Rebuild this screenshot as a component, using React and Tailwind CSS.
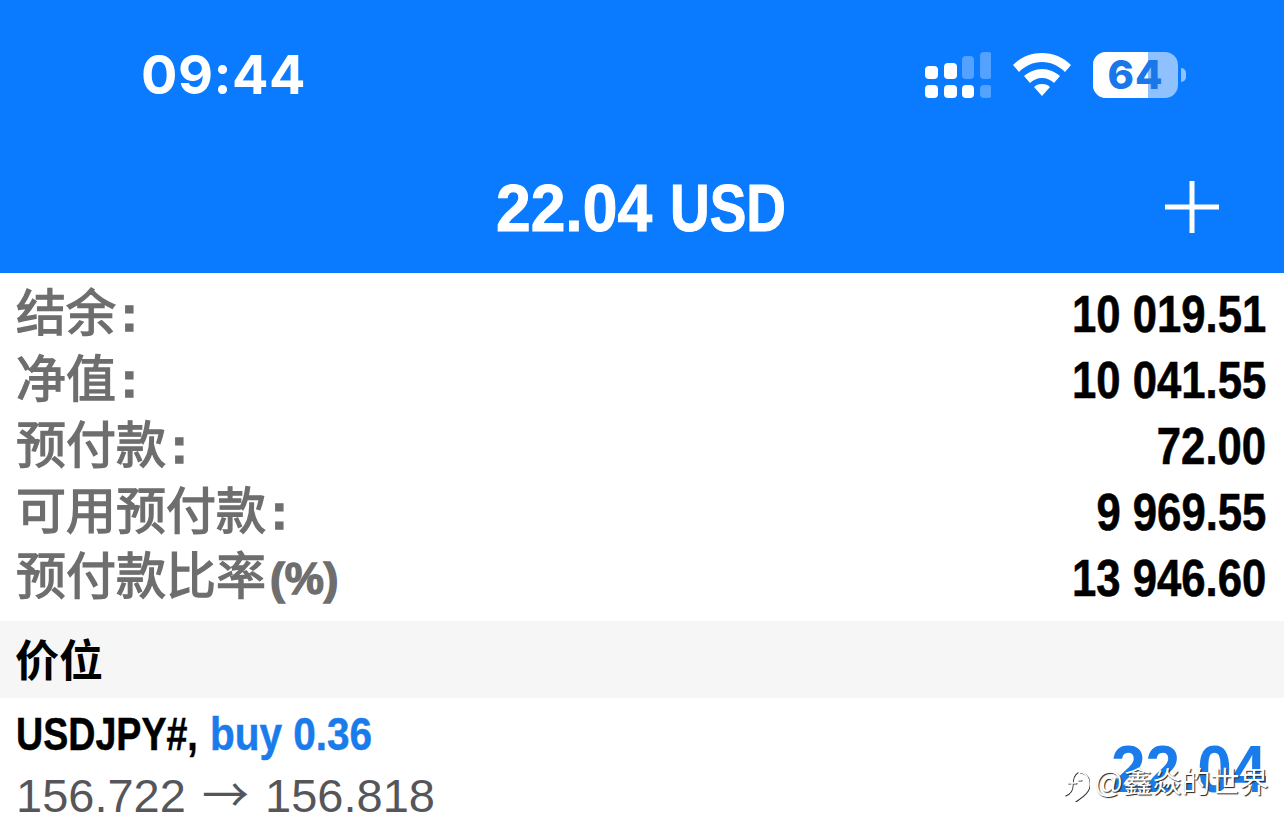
import React from 'react';

const cjk = '"Liberation Sans", "Noto Sans CJK SC", sans-serif';

const rows = [
  [<>结余<span className="pl-[5px] font-bold">:</span></>, '10 019.51'],
  [<>净值<span className="pl-[5px] font-bold">:</span></>, '10 041.55'],
  [<>预付款<span className="pl-[5px] font-bold">:</span></>, '72.00'],
  [<>可用预付款<span className="pl-[5px] font-bold">:</span></>, '9 969.55'],
  [<>预付款比率<span className="pl-[4px] text-[44px] font-bold">(%)</span></>, '13 946.60'],
];

function SignalIcon() {
  return (
    <svg width="68" height="48" viewBox="0 0 68 48" fill="#fff">
      <rect x="2" y="14" width="13" height="13" rx="4" />
      <rect x="21" y="11" width="13" height="16" rx="4" />
      <rect x="39" y="4" width="12" height="23" rx="4" opacity="0.3" />
      <rect x="57" y="0" width="12" height="27" rx="4" opacity="0.3" />
      <rect x="2" y="33" width="13" height="13" rx="4" />
      <rect x="21" y="33" width="13" height="13" rx="4" />
      <rect x="39" y="33" width="12" height="13" rx="4" />
      <rect x="57" y="33" width="12" height="13" rx="4" opacity="0.3" />
    </svg>
  );
}

function WifiIcon() {
  return (
    <svg width="58" height="44" viewBox="0 0 58 44" fill="#fff">
      <path d="M29 0C18 0 8 4 0 12l6 7c6-6 14-10 23-10s17 4 23 10l6-7C50 4 40 0 29 0z" />
      <path d="M29 16c-7 0-13 3-18 7l6 7c3-3 7-5 12-5s9 2 12 5l6-7c-5-4-11-7-18-7z" />
      <path d="M29 31c-4 0-6 1-8 3l8 9 8-9c-2-2-4-3-8-3z" />
    </svg>
  );
}

function ZhihuMark() {
  return (
    <svg width="25" height="31" viewBox="0 0 25 31" fill="none" strokeLinecap="round">
      <g stroke="#333" strokeWidth="1.5" transform="translate(0.8 0.8)">
        <path d="M12 1C8 3 7 8 7 14C7 19 5 22 0 24M15 1C21 2 24 7 24 13C24 21 17 25 10 30M3 12H11M13 9H16" />
      </g>
      <path stroke="#fff" strokeWidth="1.5" d="M12 1C8 3 7 8 7 14C7 19 5 22 0 24M15 1C21 2 24 7 24 13C24 21 17 25 10 30M3 12H11M13 9H16" />
    </svg>
  );
}

function Battery() {
  return (
    <div className="flex items-center gap-[3px]">
      <div className="relative flex h-[46px] w-[85px] items-center justify-center rounded-[13px] bg-[#8fc1ff]">
        <div className="absolute inset-y-0 left-0 w-[55px] rounded-l-[13px] bg-white" />
        <span className="relative text-[40px] font-extrabold leading-[46px] tracking-[1px] text-[#1a77ea]" style={{ fontFamily: 'Inter, sans-serif' }}>64</span>
      </div>
      <div className="h-[14px] w-[5px] rounded-r-full bg-[#8fc1ff]" />
    </div>
  );
}

export default function App() {
  return (
    <div className="relative h-[833px] w-[1284px] overflow-hidden bg-white" style={{ fontFamily: cjk }}>
      {/* blue header */}
      <div className="flex h-[273px] flex-col bg-[#0a7aff] text-white">
        <div className="flex h-[148px] items-start justify-between pl-[141px] pr-[98px] pt-[46px]">
          <span className="text-[54px] font-bold leading-[58px] tracking-[0.5px]" style={{ fontFamily: 'Inter, sans-serif' }}>09:44</span>
          <div className="flex items-start pt-[6px]">
            <SignalIcon />
            <div className="ml-[22px] mt-[1px]"><WifiIcon /></div>
            <div className="ml-[22px]"><Battery /></div>
          </div>
        </div>
        <div className="relative flex h-[125px] items-start justify-center gap-[19px] pr-[4px] pt-[25px]">
          <span className="w-[155px] origin-left scale-x-[0.945] whitespace-nowrap text-[66px] font-bold leading-[70px] [-webkit-text-stroke:1px_#fff]">22.04</span>
          <span className="w-[114px] origin-left scale-x-[0.832] whitespace-nowrap text-[66px] font-bold leading-[70px] [-webkit-text-stroke:1px_#fff]">USD</span>
          <svg className="absolute left-[1164px] top-[31px]" width="56" height="56" viewBox="0 0 56 56" stroke="#fff" strokeWidth="5">
            <path d="M28 2v52M1 28h54" />
          </svg>
        </div>
      </div>

      {/* account summary */}
      <div className="flex h-[348px] flex-col pt-[8px]">
        {rows.map(([label, value]) => (
          <div key={value} className="flex h-[66px] items-center justify-between pl-[16px] pr-[18px]">
            <span className="whitespace-nowrap text-[50px] leading-[66px] text-[#6e6e6e] [-webkit-text-stroke:1.4px_#6e6e6e]">{label}</span>
            <span className="origin-right scale-x-[0.84] whitespace-nowrap text-[52px] font-bold leading-[66px] text-black [-webkit-text-stroke:0.6px_#000]">{value}</span>
          </div>
        ))}
      </div>

      <div className="flex h-[77px] items-center bg-[#f6f6f7] pl-[15px]">
        <span className="pt-[3px] text-[44px] font-bold leading-[77px] text-black">价位</span>
      </div>

      {/* open position */}
      <div className="relative flex justify-between pl-[16px] pr-[18px] pt-[8px]">
        <div>
          <div className="flex gap-[13px] whitespace-nowrap text-[47px] font-bold leading-[56px]">
            <span className="w-[181px] origin-left scale-x-[0.8] text-black [-webkit-text-stroke:0.5px_#000]">USDJPY#,</span>
            <span className="w-[161px] origin-left scale-x-[0.862] text-[#1a7ceb] [-webkit-text-stroke:0.5px_#1a7ceb]">buy 0.36</span>
          </div>
          <div className="mt-[4px] whitespace-nowrap text-[47px] leading-[52px] text-[#56565a] [word-spacing:3px]">
            156.722 <span style={{ fontFamily: '"Noto Sans CJK SC", sans-serif' }}>→</span> 156.818
          </div>
        </div>
        <span className="mt-[28px] origin-right scale-x-[0.94] text-[66px] font-bold leading-[70px] text-[#1a7ceb]">22.04</span>
      </div>

      {/* watermark */}
      <div className="absolute left-[1065px] top-[771px] flex items-start gap-[4px] whitespace-nowrap text-[29px] leading-[24px] text-white [text-shadow:1px_1px_1px_#222]">
        <ZhihuMark />
        <span>@鑫焱的世界</span>
      </div>
    </div>
  );
}
